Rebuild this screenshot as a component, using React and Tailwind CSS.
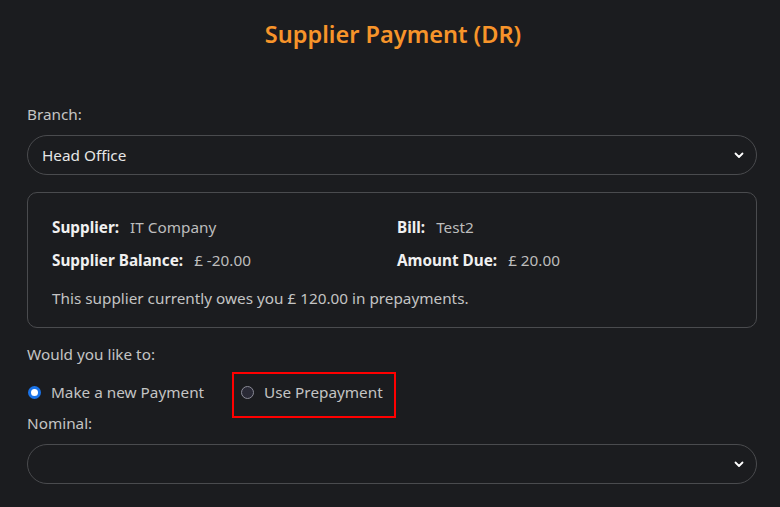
import React, { useState } from 'react';

function Chevron() {
  return (
    <svg className="w-3 h-3 text-white" viewBox="0 0 12 12" fill="none">
      <path d="M2.5 4.5 6 8l3.5-3.5" stroke="currentColor" strokeWidth="1.8" strokeLinecap="round" strokeLinejoin="round" />
    </svg>
  );
}

function SelectBox({ value }) {
  return (
    <div className="h-10 rounded-[20px] border border-[#4a4b4e] bg-[#1b1c1f] flex items-center justify-between pl-[14px] pr-[11px]">
      <span className="text-[#e6e6e6] text-[15.3px]">{value}</span>
      <Chevron />
    </div>
  );
}

function Radio({ checked, label, onClick }) {
  return (
    <button onClick={onClick} className="flex items-center gap-[10px] text-[#c4c4c4] text-[15.3px] leading-6">
      {checked ? (
        <span className="w-[13px] h-[13px] rounded-full bg-white border-[3.5px] border-[#1a73e8]" />
      ) : (
        <span className="w-[13px] h-[13px] rounded-full bg-[#2a2a36] border border-[#8a8a96]" />
      )}
      {label}
    </button>
  );
}

export default function App() {
  const [mode, setMode] = useState('new');

  return (
    <div
      className="min-h-[507px] bg-[#1b1c1f] pl-[27px] pr-[23px] pt-[18px]"
      style={{ fontFamily: '"Noto Sans", sans-serif' }}
    >
      <h1 className="text-center text-[#f7942a] text-[23.5px] font-semibold leading-8 pl-[2px]">Supplier Payment (DR)</h1>

      <div className="mt-[52px] text-[#c4c4c4] text-[15.3px] leading-6">Branch:</div>
      <div className="mt-[9px]">
        <SelectBox value="Head Office" />
      </div>

      {/* Supplier summary */}
      <div className="mt-[17px] border border-[#4a4b4e] rounded-[10px] px-[24px] pt-[22px] pb-[17px]">
        <div className="grid grid-cols-[345px_1fr] gap-y-[9px] text-[15.3px] leading-6">
          <div>
            <span className="font-bold text-[#f0f0f0]">Supplier:</span>
            <span className="ml-[11px] text-[#bdbdbd]">IT Company</span>
          </div>
          <div>
            <span className="font-bold text-[#f0f0f0]">Bill:</span>
            <span className="ml-[11px] text-[#bdbdbd]">Test2</span>
          </div>
          <div>
            <span className="font-bold text-[#f0f0f0]">Supplier Balance:</span>
            <span className="ml-[11px] text-[#bdbdbd]">£ -20.00</span>
          </div>
          <div>
            <span className="font-bold text-[#f0f0f0]">Amount Due:</span>
            <span className="ml-[11px] text-[#bdbdbd]">£ 20.00</span>
          </div>
        </div>
        <p className="mt-[14px] text-[#c4c4c4] text-[15.3px] leading-6">
          This supplier currently owes you £ 120.00 in prepayments.
        </p>
      </div>

      <div className="mt-[14px] text-[#c4c4c4] text-[15.3px] leading-6">Would you like to:</div>
      <div className="mt-[6px] flex items-start">
        <div className="w-[205px] pt-[8px] pl-[1px]">
          <Radio checked={mode === 'new'} label="Make a new Payment" onClick={() => setMode('new')} />
        </div>
        <div className="border-2 border-[#ff0000] h-[46px] w-[164px] pt-[6px] pl-[7px]">
          <Radio checked={mode === 'pre'} label="Use Prepayment" onClick={() => setMode('pre')} />
        </div>
      </div>

      <div className="text-[#c4c4c4] text-[15.3px] leading-6 -mt-[7px]">Nominal:</div>
      <div className="mt-[9px]">
        <SelectBox value="" />
      </div>
    </div>
  );
}
